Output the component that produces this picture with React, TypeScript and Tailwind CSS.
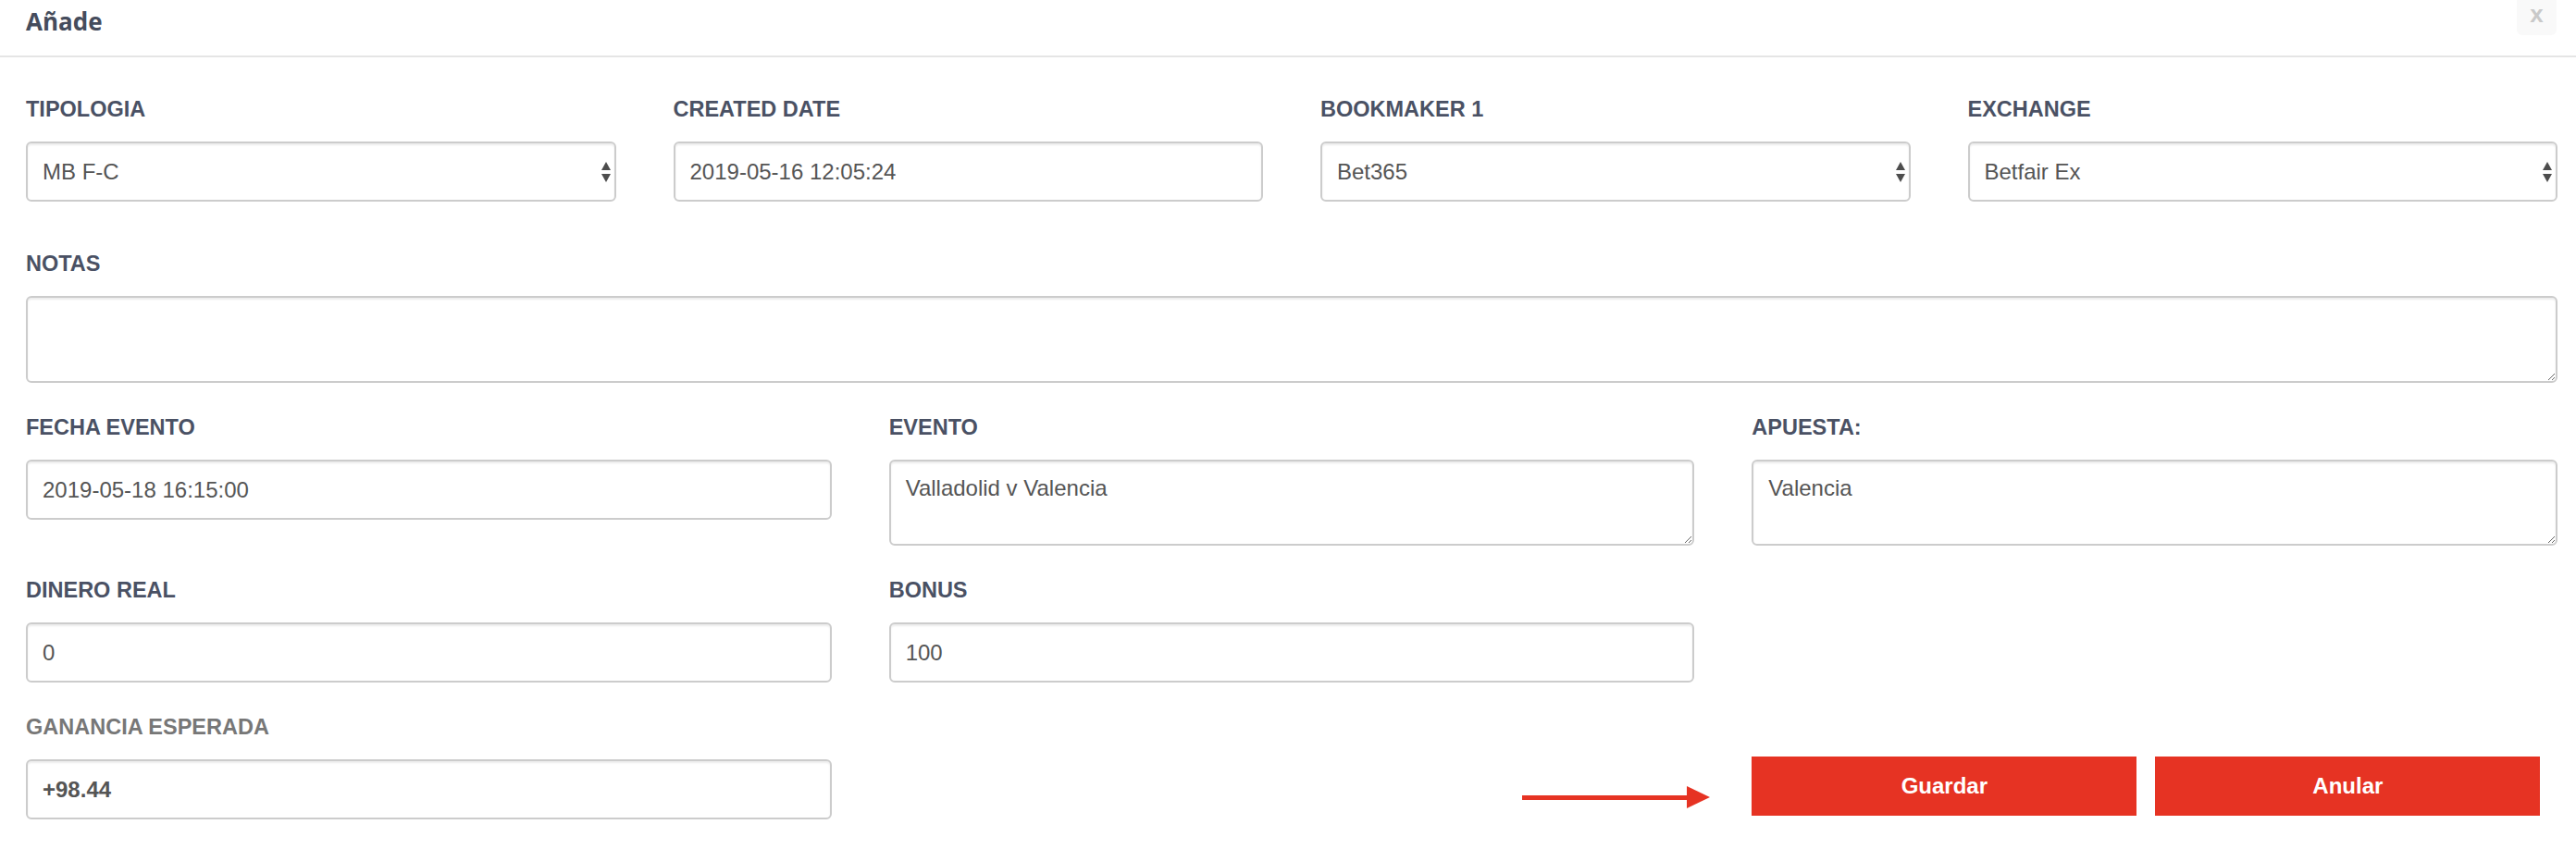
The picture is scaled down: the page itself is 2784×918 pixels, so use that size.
import React from 'react';

const labelCls = 'block text-[23.5px] font-bold leading-[28px] text-[#4a5164] mb-[21px]';
const boxCls =
  'w-full rounded-[6px] border-2 border-[#cccccc] bg-white px-[16px] text-[24px] text-[#555555] shadow-[inset_0_2px_2px_rgba(0,0,0,0.075)] outline-none';

const Field: React.FC<{ label: string; value: string; bold?: boolean; muted?: boolean }> = ({ label, value, bold, muted }) => (
  <div>
    <label className={muted ? 'block text-[23.5px] font-bold leading-[28px] text-[#777777] mb-[21px]' : labelCls}>{label}</label>
    <input readOnly value={value} className={`${boxCls} h-[65px] ${bold ? 'font-bold' : ''}`} />
  </div>
);

const SelectField: React.FC<{ label: string; value: string }> = ({ label, value }) => (
  <div>
    <label className={labelCls}>{label}</label>
    <div className={`${boxCls} relative flex h-[65px] items-center`}>
      <span>{value}</span>
      <svg className="absolute right-[4px] top-1/2 -translate-y-1/2" width="10" height="22" viewBox="0 0 10 22">
        <polygon points="0,9 5,0 10,9" fill="#4d4d4d" />
        <polygon points="0,13 10,13 5,22" fill="#4d4d4d" />
      </svg>
    </div>
  </div>
);

const AreaField: React.FC<{ label: string; value: string; h: string }> = ({ label, value, h }) => (
  <div>
    <label className={labelCls}>{label}</label>
    <textarea readOnly value={value} className={`${boxCls} ${h} block resize py-[12px] leading-[34px]`} />
  </div>
);

export default function App() {
  return (
    <div className="min-h-screen bg-white font-['Liberation_Sans',Arial,sans-serif]">
      {/* Header */}
      <div className="flex h-[62px] justify-between border-b-2 border-[#e5e5e5] pl-[28px] pr-[21px]">
        <h1 className="pt-[8px] font-['Open_Sans',sans-serif] text-[26px] font-bold leading-[30px] text-[#454c5c]">Añade</h1>
        <div className="flex h-[38px] w-[43px] justify-center rounded-b-[6px] bg-[#f9f9f9] pt-[2px]">
          <span className="text-[26px] font-bold leading-[26px] text-[#c9c9c9]">x</span>
        </div>
      </div>

      {/* Body */}
      <div className="pl-[28px] pr-[20px] pt-[42px]">
        <div className="mb-[53px] grid grid-cols-4 gap-x-[62px]">
          <SelectField label="TIPOLOGIA" value="MB F-C" />
          <Field label="CREATED DATE" value="2019-05-16 12:05:24" />
          <SelectField label="BOOKMAKER 1" value="Bet365" />
          <SelectField label="EXCHANGE" value="Betfair Ex" />
        </div>

        <div className="mb-[34px]">
          <AreaField label="NOTAS" value="" h="h-[94px]" />
        </div>

        <div className="mb-[34px] grid grid-cols-3 items-start gap-x-[62px]">
          <Field label="FECHA EVENTO" value="2019-05-18 16:15:00" />
          <AreaField label="EVENTO" value="Valladolid v Valencia" h="h-[93px]" />
          <AreaField label="APUESTA:" value="Valencia" h="h-[93px]" />
        </div>

        <div className="mb-[34px] grid grid-cols-3 gap-x-[62px]">
          <Field label="DINERO REAL" value="0" />
          <Field label="BONUS" value="100" />
          <div />
        </div>

        <div className="grid grid-cols-3 items-start gap-x-[62px]">
          <Field label="GANANCIA ESPERADA" value="+98.44" bold muted />
          <div className="flex justify-end">
            <svg className="mr-[-18px] mt-[78px]" width="204" height="24" viewBox="0 0 204 24">
              <rect x="0" y="10" width="180" height="5" fill="#e63323" />
              <polygon points="178,0 203,12 178,24" fill="#e63323" />
            </svg>
          </div>
          <div className="mt-[46px] flex gap-[20px]">
            <button className="h-[64px] w-[416px] bg-[#e63323] text-[24px] font-bold text-white">Guardar</button>
            <button className="h-[64px] w-[416px] bg-[#e63323] text-[24px] font-bold text-white">Anular</button>
          </div>
        </div>
      </div>
    </div>
  );
}
